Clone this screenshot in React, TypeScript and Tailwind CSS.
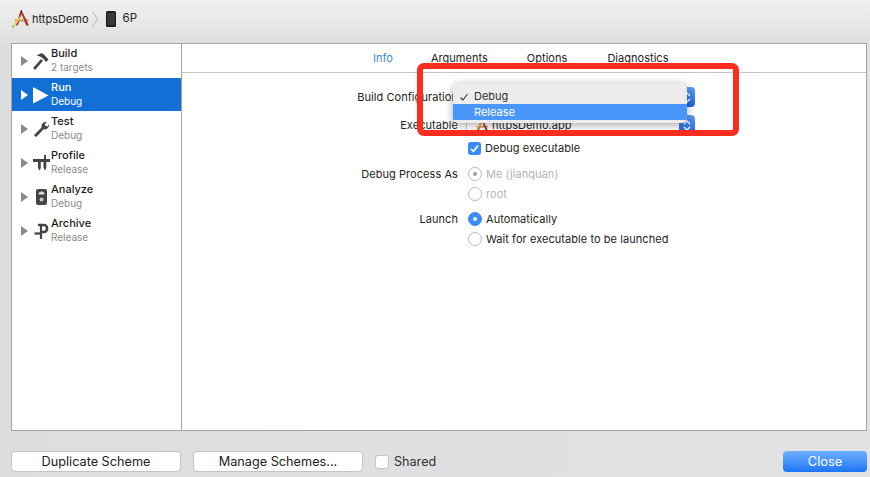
import React from "react";

const font = { fontFamily: "Inter, 'Liberation Sans', sans-serif" };

function Hammer() {
  return (
    <svg width="16" height="17" viewBox="0 0 16 17" fill="#444">
      <path d="M0.5 14.5 8 6l2 1.8L2.5 16.5C1.5 17 0 15.7 0.5 14.5Z" />
      <path d="M3.5 2.5 8 0.3 10.5 1 15.5 6.5 13.2 9 9.5 5 7 3.5Z" />
    </svg>
  );
}
function Play() {
  return (
    <svg width="16" height="17" viewBox="0 0 16 17" fill="#fff">
      <path d="M0 0 15.5 8.5 0 16.5Z" />
    </svg>
  );
}
function Wrench() {
  return (
    <svg width="15" height="16" viewBox="0 0 15 16" fill="#444">
      <path d="M0.5 13.5 7.5 6.5C7 3 9.5 0.3 13 1L10.8 3.2 11.6 5 13.3 5.4 15 3.3C15.4 6.8 12.6 9.2 9.3 8.4L3 15.3C1.5 16.4-0.5 15 0.5 13.5Z" />
    </svg>
  );
}
function Gauge() {
  return (
    <svg width="17" height="16" viewBox="0 0 17 16" fill="#444">
      <rect x="0" y="4" width="17" height="3" />
      <rect x="11" y="0" width="2" height="4" />
      <path d="M5 7h2.8v6l-1.2 2.5L5 13Z" />
      <path d="M10.5 7h2.8v6l-1.2 2.5L10.5 13Z" />
    </svg>
  );
}
function Analyze() {
  return (
    <svg width="11" height="16" viewBox="0 0 11 16">
      <rect x="0" y="0" width="11" height="16" rx="2" fill="#444" />
      <path d="M2.5 5.5a3 3 0 0 1 6 0Z" fill="#ddd" />
      <circle cx="5.5" cy="10.5" r="2" fill="#ccc" />
    </svg>
  );
}
function Clamp() {
  return (
    <svg width="15" height="16" viewBox="0 0 15 16" fill="none" stroke="#444">
      <path d="M4 2h6a3 3 0 0 1 3 3v1a3 3 0 0 1-3 3H6" strokeWidth="2.6" />
      <path d="M7 1v15" strokeWidth="2.2" />
      <path d="M0.5 10.5h6.5" strokeWidth="2.2" />
    </svg>
  );
}
function AppIcon({ size = 18 }: { size?: number }) {
  return (
    <svg width={size} height={size} viewBox="0 0 18 18" className="shrink-0">
      <path d="M3 9.5h13.5v2H3z" fill="#c09a68" />
      <path d="M8.5 0.5 4 15.5h1.8L9.5 4l4.7 11.5H17L9.8 0.5Z" fill="#a83232" />
      <path d="M0.8 15.8 8 6.2l1.3 1L2 17Z" fill="#ecd04a" />
      <path d="M0.8 15.8 2 17 0.4 17.4Z" fill="#333" />
      <path d="M8.5 0.5 10 0.2 9.8 2.5Z" fill="#222" />
    </svg>
  );
}
function Phone() {
  return (
    <svg width="10" height="16" viewBox="0 0 10 16">
      <rect x="0" y="0" width="10" height="16" rx="1.5" fill="#1c1c1c" />
      <rect x="1.2" y="2" width="7.6" height="12" fill="#3a3a3a" />
    </svg>
  );
}
function Stepper() {
  return (
    <span className="flex h-[20px] w-[16px] shrink-0 items-center justify-center rounded-r-[4px] bg-gradient-to-b from-[#5b9df5] to-[#1a62d9]">
      <svg width="8" height="13" viewBox="0 0 8 13" fill="none" stroke="#fff" strokeWidth="1.4">
        <path d="M1 5 4 2l3 3M1 8l3 3 3-3" />
      </svg>
    </span>
  );
}

const rows = [
  { name: "Build", sub: "2 targets", icon: <Hammer /> },
  { name: "Run", sub: "Debug", icon: <Play />, active: true },
  { name: "Test", sub: "Debug", icon: <Wrench /> },
  { name: "Profile", sub: "Release", icon: <Gauge /> },
  { name: "Analyze", sub: "Debug", icon: <Analyze /> },
  { name: "Archive", sub: "Release", icon: <Clamp /> },
];

function Row({ name, sub, icon, active }: { name: string; sub: string; icon: React.ReactNode; active?: boolean }) {
  return (
    <div className={`flex items-center ${active ? "mb-[1px] h-[33px] bg-[#116fd6] pt-[1px]" : "h-[34px]"}`}>
      <svg width="7" height="10" viewBox="0 0 7 10" className="ml-[9px] shrink-0" fill={active ? "#fff" : "#8a8a8a"}>
        <path d="M0 0 7 5 0 10Z" />
      </svg>
      <span className="ml-[3px] flex w-[20px] shrink-0 justify-center">{icon}</span>
      <div className="-mt-[3px] flex flex-col">
        <span className={`text-[11px] leading-[14px] font-medium ${active ? "text-white" : "text-[#1c1c1c]"}`}>{name}</span>
        <span className={`text-[10px] leading-[14px] ${active ? "text-white" : "text-[#8b8b8b]"}`}>{sub}</span>
      </div>
    </div>
  );
}

function Radio({ on, disabled, label }: { on?: boolean; disabled?: boolean; label: string }) {
  const ring = on && !disabled ? "bg-[#3a8bf5] border-[#3a8bf5]" : "bg-white border-[#b9b9b9]";
  const dot = disabled ? "bg-[#9a9a9a]" : "bg-white";
  return (
    <div className="flex h-[20px] items-center">
      <span className={`flex h-[14px] w-[14px] shrink-0 items-center justify-center rounded-full border ${ring}`}>
        {on && <span className={`h-[4px] w-[4px] rounded-full ${dot}`} />}
      </span>
      <span className={`ml-[4px] text-[11px] tracking-[0.06px] whitespace-nowrap ${disabled ? "text-[#b4b4b4]" : "text-[#222]"}`}>{label}</span>
    </div>
  );
}

function FormRow({ label, children, h }: { label?: string; children: React.ReactNode; h?: string }) {
  return (
    <div className={`flex ${h ?? ""}`}>
      <div className="h-[20px] w-[276px] shrink-0 text-right text-[11px] leading-[20px] tracking-[0.06px] whitespace-nowrap text-[#222]">{label}</div>
      <div className="ml-[10px] min-w-0 flex-1">{children}</div>
    </div>
  );
}

function FooterButton({ label }: { label: string }) {
  return (
    <button className="h-[21px] w-[170px] rounded-[4px] border border-[#c4c4c4] bg-white text-[12.7px] text-[#222]">{label}</button>
  );
}

export default function App() {
  return (
    <div style={font} className="relative flex h-[477px] w-[870px] flex-col overflow-hidden bg-gradient-to-r from-[#dcdddd] to-[#e2e2e4]">
      <div className="flex h-[43px] items-center bg-gradient-to-b from-[#f0f0f0] to-[#dedfdf] pb-[5px] pl-[12px]">
        <AppIcon />
        <span className="ml-[2px] text-[11px] text-[#222]">httpsDemo</span>
        <svg width="6" height="16" viewBox="0 0 6 16" fill="none" stroke="#b5b5b5" className="ml-[3px]">
          <path d="M0.5 0.5 5.5 8 0.5 15.5" />
        </svg>
        <span className="ml-[8px]"><Phone /></span>
        <span className="ml-[7px] text-[11.5px] text-[#222]">6P</span>
      </div>

      <div className="ml-[11px] flex h-[388px] w-[856px] border border-[#a5a5a5] bg-white">
        <aside className="w-[170px] shrink-0 border-r border-[#a5a5a5]">
          {rows.map((r) => (
            <Row key={r.name} {...r} />
          ))}
        </aside>
        <main className="min-w-0 flex-1">
          <nav className="flex h-[29px] items-center border-b border-[#c4c4c4] pl-[191px] text-[11px] tracking-[0.03px] text-[#222]">
            <span className="text-[#3a8bd8]">Info</span>
            <span className="ml-[38px]">Arguments</span>
            <span className="ml-[39px]">Options</span>
            <span className="ml-[40px]">Diagnostics</span>
          </nav>
          <div className="flex flex-col pt-[14px]">
            <FormRow label="Build Configuration" h="h-[28px]">
              <div className="-ml-[15px] flex h-[20px] w-[242px] items-center justify-end rounded-[4px] bg-white">
                <Stepper />
              </div>
            </FormRow>
            <FormRow label="Executable" h="h-[23px]">
              <div className="-ml-[2px] flex h-[20px] w-[229px] items-center rounded-[4px] border-l border-[#d0d0d0] bg-white pl-[7px]">
                <AppIcon size={15} />
                <span className="ml-[3px] flex-1 text-[11px] text-[#222]">httpsDemo.app</span>
                <Stepper />
              </div>
            </FormRow>
            <FormRow h="h-[26px]">
              <div className="flex h-[20px] items-center">
                <span className="flex h-[13px] w-[13px] items-center justify-center rounded-[3px] bg-[#3a8bf5]">
                  <svg width="9" height="9" viewBox="0 0 9 9" fill="none" stroke="#fff" strokeWidth="1.7">
                    <path d="M1 5 3.5 7.5 8 1.5" />
                  </svg>
                </span>
                <span className="ml-[4px] text-[11px] tracking-[0.06px] text-[#222]">Debug executable</span>
              </div>
            </FormRow>
            <FormRow label="Debug Process As" h="h-[45px]">
              <Radio on disabled label="Me (jianquan)" />
              <Radio disabled label="root" />
            </FormRow>
            <FormRow label="Launch">
              <Radio on label="Automatically" />
              <Radio label="Wait for executable to be launched" />
            </FormRow>
          </div>
        </main>
      </div>

      <footer className="flex flex-1 items-center gap-[12px] pt-[15px] pr-[3px] pl-[11px]">
        <FooterButton label="Duplicate Scheme" />
        <FooterButton label="Manage Schemes..." />
        <div className="flex items-center gap-[5px] pt-[2px]">
          <span className="h-[14px] w-[14px] rounded-[3px] border border-[#c4c4c4] bg-white" />
          <span className="text-[12.6px] text-[#333]">Shared</span>
        </div>
        <button className="ml-auto h-[21px] w-[84px] rounded-[4px] bg-gradient-to-b from-[#6fb0fb] to-[#1a74f7] text-[12.8px] text-white">Close</button>
      </footer>

      {/* Open pop-up menu lying over the form */}
      <div className="absolute top-[83px] left-[453px] w-[234px] overflow-hidden rounded-[5px] bg-[#ececec] pt-[5px] pb-[3px] text-[11px] leading-[16px] text-[#333] shadow-[0_2px_8px_rgba(0,0,0,0.35)]">
        <div className="relative h-[16px] pl-[21px]">
          <svg width="8" height="8" viewBox="0 0 8 8" fill="none" stroke="#333" strokeWidth="1.1" className="absolute top-[5px] left-[7px]">
            <path d="M0.5 4.5 3 7 7.5 1" />
          </svg>
          Debug
        </div>
        <div className="h-[16px] bg-[#4a97fb] pl-[21px] text-white">Release</div>
      </div>

      {/* Red annotation rectangle */}
      <div className="pointer-events-none absolute top-[63px] left-[417px] h-[73px] w-[322px] rounded-[7px] border-[6px] border-[#fe2b1f]" />
    </div>
  );
}
